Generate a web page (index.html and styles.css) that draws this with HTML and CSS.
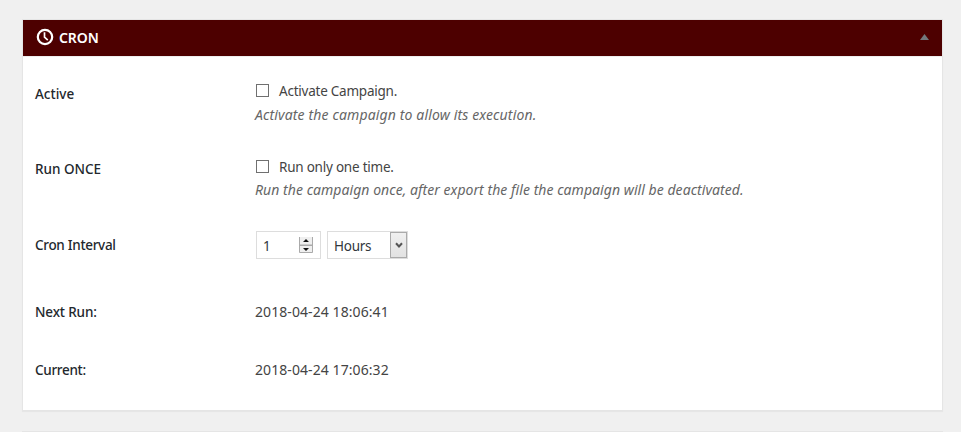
FILE: index.html
```html
<!DOCTYPE html>
<html lang="en">
<head>
<meta charset="utf-8">
<title>Cron</title>
<link rel="stylesheet" href="styles.css">
</head>
<body>
<section class="postbox">
  <header class="postbox-header">
    <svg class="clock" viewBox="0 0 18 18" fill="none" stroke="#fff"><circle cx="9" cy="9" r="7.2" stroke-width="2.2"/><path d="M8.5 4.2V9.2L11.8 12.2" stroke-width="1.7"/></svg>
    <h2><span class="t-title">CRON</span></h2>
    <svg class="toggle" viewBox="0 0 9 6"><path d="M4.5 0L9 6H0Z" fill="#72777c"/></svg>
  </header>
  <div class="form">
    <div class="row row-check">
      <div class="label"><span class="t-active">Active</span></div>
      <div class="field">
        <label class="check"><span class="box"></span><span class="t-activate">Activate Campaign.</span></label>
        <p class="description"><span class="t-desc1">Activate the campaign to allow its execution.</span></p>
      </div>
    </div>
    <div class="row row-once">
      <div class="label"><span class="t-once">Run ONCE</span></div>
      <div class="field">
        <label class="check"><span class="box"></span><span class="t-only">Run only one time.</span></label>
        <p class="description"><span class="t-desc2">Run the campaign once, after export the file the campaign will be deactivated.</span></p>
      </div>
    </div>
    <div class="row row-interval">
      <div class="label"><span class="t-interval">Cron Interval</span></div>
      <div class="controls">
        <div class="number"><span>1</span>
          <svg class="spinner" viewBox="0 0 14 16"><path d="M0 0H14V16H0Z" fill="#efefef"/><path d="M.5 0V15.5H13.5V0M0 8H14" fill="none" stroke="#aaa"/><path d="M0 8.5H14" stroke="#aaa"/><path d="M7 2L10 5H4ZM4 11H10L7 14Z" fill="#111"/></svg>
        </div>
        <div class="select"><span class="t-hours">Hours</span>
          <span class="arrow"><svg viewBox="0 0 8 7"><path d="M1 1.3L4 4.5L7 1.3" fill="none" stroke="#555" stroke-width="2"/></svg></span>
        </div>
      </div>
    </div>
    <div class="row row-next">
      <div class="label"><span class="t-next">Next Run:</span></div>
      <div class="value"><span class="t-date">2018-04-24 18:06:41</span></div>
    </div>
    <div class="row">
      <div class="label"><span class="t-current">Current:</span></div>
      <div class="value"><span class="t-date">2018-04-24 17:06:32</span></div>
    </div>
  </div>
</section>
<section class="next-box"></section>
</body>
</html>
```
FILE: styles.css
```css
* { box-sizing: border-box; }
body {
  margin: 0;
  height: 432px;
  padding: 19px 18px 0 22px;
  background: #f0f0f0;
  color: #444;
  font: 13.5px/20px "Noto Sans", "Open Sans", sans-serif;
  white-space: nowrap;
}
.postbox {
  height: 392px;
  background: #fff;
  border: 1px solid #e5e5e5;
  box-shadow: 0 1px 1px rgba(0, 0, 0, .04);
}
.next-box { height: 1px; margin-top: 20px; background: #e5e5e5; }
.postbox-header {
  display: flex;
  align-items: center;
  height: 36px;
  padding: 0 13px 0 13px;
  background: #4d0000;
  color: #fff;
  box-shadow: 0 1px #eee;
}
.clock { width: 18px; height: 18px; margin: -2px 5px 0 0; }
h2 { margin: 0; font-size: 14px; font-weight: 600; }
.toggle { width: 9px; height: 6px; margin-left: auto; margin-top: -2px; }
.form { padding: 28px 12px 0; }
.row { display: grid; grid-template-columns: 220px 1fr; height: 58px; }
.row-check { height: 75px; }
.row-once { height: 76px; }
.row-interval { height: 67px; }
.label { color: #23282d; font-weight: 500; }
.field { margin-top: -3px; }
.row-once .field { margin-top: -2px; }
.check { display: flex; align-items: center; height: 20px; }
.box { width: 13px; height: 13px; margin: -1px 10px 0 1px; border: 1px solid #707070; background: #fff; }
.description { margin: 4px 0 0; color: #666; font-size: 14px; font-style: italic; }
.row-once .description { margin-top: 3px; }
.controls { display: flex; gap: 6px; margin: -4px 0 0 1px; height: 28px; }
.number, .select { display: flex; align-items: center; justify-content: space-between; border: 1px solid #ddd; color: #32373c; }
.number { width: 65px; padding: 0 7px 0 6px; }
.spinner { width: 14px; height: 16px; margin-top: -1px; }
.select { width: 81px; padding-left: 6px; }
.arrow { display: flex; align-items: center; justify-content: center; width: 17px; height: 26px; border: 1px solid #aaa; background: linear-gradient(#f0f0f0, #e2e2e2); }
.arrow svg { width: 8px; height: 7px; }
.number > span, .t-hours { padding-top: 1px; }
.t-hours { letter-spacing: -.25px; }
.t-activate, .t-only { letter-spacing: -.23px; }
.t-desc1 { letter-spacing: .14px; }
.t-desc2 { letter-spacing: .05px; }
.t-date { font-size: 14px; letter-spacing: .08px; }
.t-title { letter-spacing: -.1px; }
.t-interval, .t-current { letter-spacing: -.3px; }
.t-next { letter-spacing: -.15px; }
```
